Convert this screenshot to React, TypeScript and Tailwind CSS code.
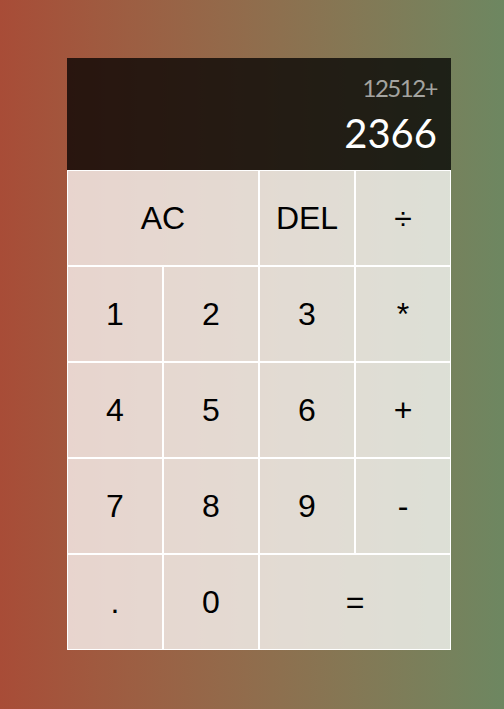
const keys: { label: string; span?: boolean }[] = [
  { label: "AC", span: true },
  { label: "DEL" },
  { label: "÷" },
  { label: "1" },
  { label: "2" },
  { label: "3" },
  { label: "*" },
  { label: "4" },
  { label: "5" },
  { label: "6" },
  { label: "+" },
  { label: "7" },
  { label: "8" },
  { label: "9" },
  { label: "-" },
  { label: "." },
  { label: "0" },
  { label: "=", span: true },
];

export default function App() {
  return (
    <div className="flex min-h-[709px] w-full items-start bg-gradient-to-r from-[#a84c37] to-[#6d8761] pl-[67px] pt-[58px]">
      <div className="grid grid-cols-[repeat(4,96px)] grid-rows-[112px_repeat(5,96px)]">
        <div className="col-span-4 flex flex-col items-end justify-around break-all bg-black/75 px-[14px] pt-[11px] pb-[11px] font-['Lato',sans-serif]">
          <div className="text-[24px] leading-none tracking-[-1.5px] text-white/60">12512+</div>
          <div className="text-[40px] leading-none text-white">2366</div>
        </div>
        {keys.map((k) => (
          <button
            key={k.label}
            className={`${k.span ? "col-span-2" : ""} cursor-pointer border border-white bg-white/75 font-['Liberation_Sans',Arial,sans-serif] text-[32px] text-black outline-none`}
          >
            {k.label}
          </button>
        ))}
      </div>
    </div>
  );
}
